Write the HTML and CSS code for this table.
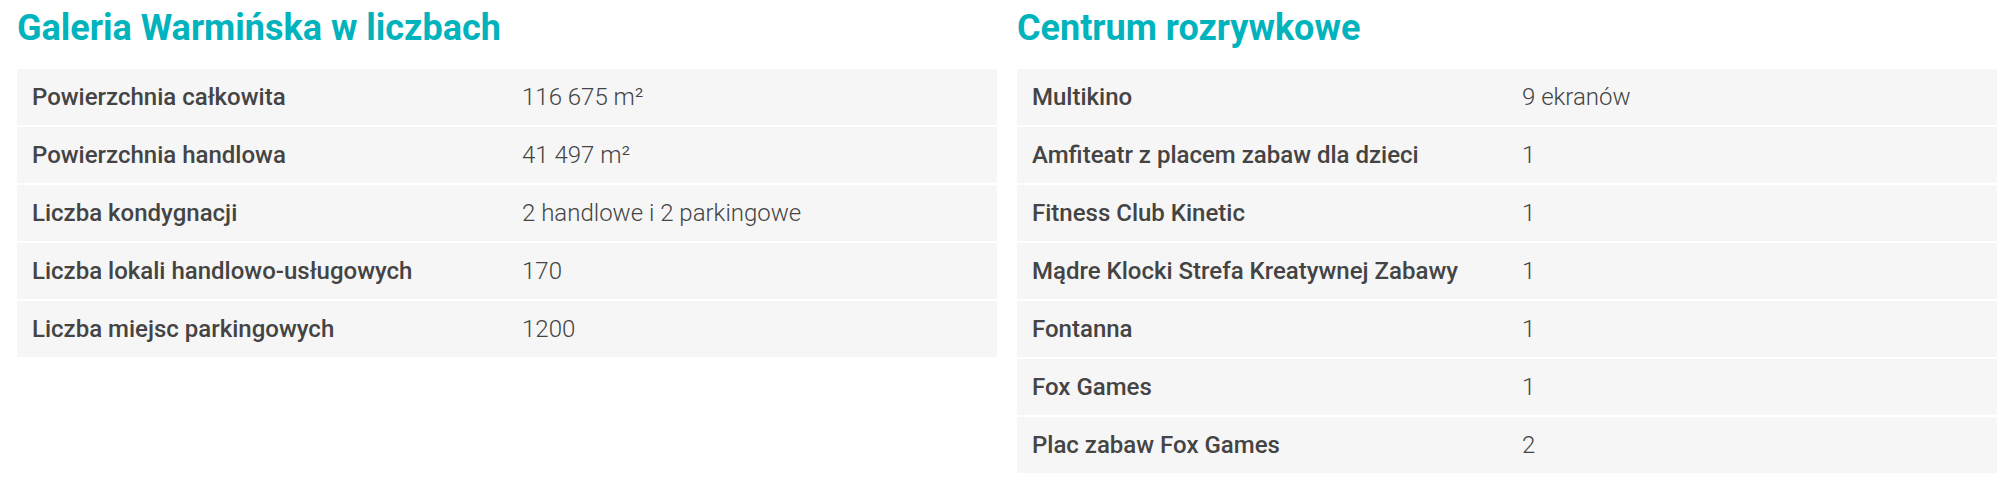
FILE: index.html
```html
<!DOCTYPE html>
<html lang="pl">
<head>
<meta charset="utf-8">
<title>Galeria Warmińska</title>
<link rel="stylesheet" href="styles.css">
</head>
<body>
<div class="page">
  <section class="block">
    <h2 class="title">Galeria Warmińska w liczbach</h2>
    <div class="table">
      <div class="row"><div class="label">Powierzchnia całkowita</div><div class="value">116 675 m²</div></div>
      <div class="row"><div class="label">Powierzchnia handlowa</div><div class="value">41 497 m²</div></div>
      <div class="row"><div class="label">Liczba kondygnacji</div><div class="value">2 handlowe i 2 parkingowe</div></div>
      <div class="row"><div class="label">Liczba lokali handlowo-usługowych</div><div class="value">170</div></div>
      <div class="row"><div class="label">Liczba miejsc parkingowych</div><div class="value">1200</div></div>
    </div>
  </section>
  <section class="block">
    <h2 class="title">Centrum rozrywkowe</h2>
    <div class="table">
      <div class="row"><div class="label">Multikino</div><div class="value">9 ekranów</div></div>
      <div class="row"><div class="label">Amfiteatr z placem zabaw dla dzieci</div><div class="value">1</div></div>
      <div class="row"><div class="label">Fitness Club Kinetic</div><div class="value">1</div></div>
      <div class="row"><div class="label">Mądre Klocki Strefa Kreatywnej Zabawy</div><div class="value">1</div></div>
      <div class="row"><div class="label">Fontanna</div><div class="value">1</div></div>
      <div class="row"><div class="label">Fox Games</div><div class="value">1</div></div>
      <div class="row"><div class="label">Plac zabaw Fox Games</div><div class="value">2</div></div>
    </div>
  </section>
</div>
</body>
</html>
```

FILE: styles.css
```css
html, body {
  margin: 0;
  padding: 0;
  background: #ffffff;
}

body {
  font-family: Roboto, "Liberation Sans", sans-serif;
  color: #444444;
}

.page {
  display: grid;
  grid-template-columns: 1fr 1fr;
  column-gap: 20px;
  padding: 7px 19px 0 17px;
  align-items: start;
}

.title {
  margin: 0 0 20px 0;
  font-size: 36px;
  line-height: 42px;
  font-weight: 700;
  color: #00b3bc;
}

.table {
  display: flex;
  flex-direction: column;
  gap: 2px;
}

.row {
  display: grid;
  grid-template-columns: 1fr 1fr;
  height: 56px;
  align-items: center;
  background: #f6f6f6;
}

.label,
.value {
  padding: 0 15px;
  font-size: 24px;
}

.label {
  font-weight: 500;
  color: #444444;
}

.value {
  font-weight: 300;
  color: #444444;
}
```
